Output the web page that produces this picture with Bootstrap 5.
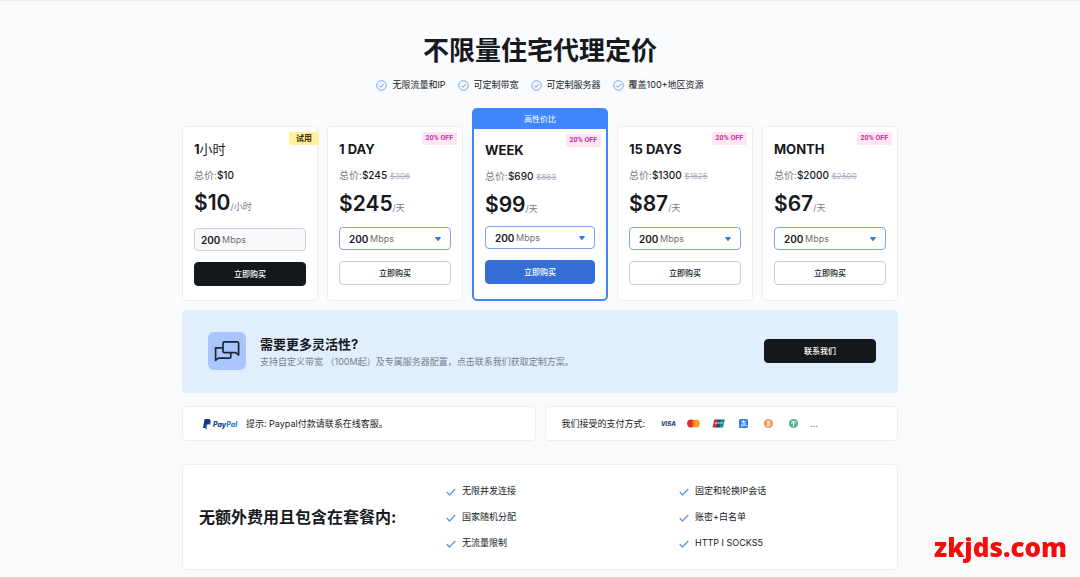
<!DOCTYPE html>
<html lang="zh-CN">
<head>
<meta charset="utf-8">
<meta name="viewport" content="width=device-width, initial-scale=1">
<title>不限量住宅代理定价</title>
<link href="https://cdn.jsdelivr.net/npm/bootstrap@5.3.0/dist/css/bootstrap.min.css" rel="stylesheet">
<style>
  body { font-family: Inter, "Noto Sans CJK SC", sans-serif; font-size: 9px; line-height: 14px; color: #16191d; background: #fafbfd; border-top: 1px solid #eceef1; }
  .page-wrap { max-width: 716px; }
  .page-title { font-size: 26px; line-height: 36px; font-weight: 700; }
  .perks { gap: 12px; margin: 9px 0 16px; }
  .perks svg { width: 11px; height: 11px; }
  .perks li { gap: 5px; }
  .plans { display: grid; grid-template-columns: repeat(5, minmax(0, 1fr)); gap: 9px; align-items: end; }
  .panel { background: #fff; border: 1px solid #eceef2; border-radius: 4px; }
  .plan { min-height: 175px; padding: 13px 11px 15px; position: relative; }
  .plan h2 { font-size: 13px; line-height: 18px; font-weight: 700; margin: 0 0 8px; }
  .plan .total { font-size: 10px; line-height: 18px; margin: 0 0 6px; color: #777c86; white-space: nowrap; }
  .plan .total strong { font-weight: 500; color: #16191d; }
  .plan .total s { font-size: 8px; color: #aaaebf; }
  .plan .price { font-size: 21px; line-height: 26px; font-weight: 600; margin: 0 0 10px; white-space: nowrap; }
  .plan .price span { font-size: 9px; line-height: 12px; font-weight: 400; color: #777c86; }
  .off { position: absolute; top: 5px; right: 5px; font-family: Roboto, "Noto Sans CJK SC", sans-serif; font-size: 7px; line-height: 13px; padding: 0 4px; font-weight: 700; color: #c0359f; background: #fde5f1; border-radius: 2px; }
  .trial-tag { right: -2px; padding: 0 7px; font-size: 8px; color: #4a2b12; background: #fff19b; border-radius: 2px 2px 0 2px; }
  .rate { position: relative; margin-bottom: 11px; }
  .rate .form-select, .rate .form-control { height: 23px; min-height: 0; font-size: 10px; line-height: 14px; font-weight: 600; color: #16191d; padding: 0 20px 0 9px; border: 1px solid #7ea6e8; border-radius: 4px; }
  .rate .form-select { background-image: url("data:image/svg+xml,%3Csvg xmlns='http://www.w3.org/2000/svg' viewBox='0 0 6 4'%3E%3Cpath d='M.6 0h4.8q.6.1.4.7L3.5 3.7q-.5.5-1 0L.2.7Q0 .1.6 0z' fill='%232b7fe0'/%3E%3C/svg%3E"); background-size: 6px 4px; background-position: right 9px center; }
  .rate .form-control { padding-left: 6px; background: #f9f9fb; border-color: #cdd0da; }
  .rate label { position: absolute; left: 31px; top: 0; line-height: 24px; font-size: 9px; color: #6d7077; pointer-events: none; }
  .rate .form-control + label { left: 28px; }
  .buy { --bs-btn-font-size: 8px; --bs-btn-line-height: 14px; --bs-btn-padding-y: 4px; --bs-btn-padding-x: 8px; --bs-btn-border-radius: 4px; --bs-btn-font-weight: 500; --bs-btn-color: #16191d; --bs-btn-bg: #fff; --bs-btn-border-color: #c9ccd6; }
  .buy-dark { --bs-btn-color: #fff; --bs-btn-bg: #14181b; --bs-btn-border-color: #14181b; }
  .buy-blue { --bs-btn-color: #fff; --bs-btn-bg: #356fd5; --bs-btn-border-color: #356fd5; }
  .plan-trial { padding-bottom: 14px; }
  .plan-trial .price { margin-bottom: 12px; }
  .plan-best { border: 2px solid #3f86fd; border-radius: 5px; padding: 0 0 15px; }
  .plan-best .ribbon { background: #3f86fd; color: #fff; font-size: 8px; line-height: 19px; text-align: center; }
  .plan-best .body-in { position: relative; padding: 12px 11px 0; }
  .plan-best .price { margin-bottom: 8px; }
  .banner { background: #e1eefe; border-radius: 4px; margin-top: 9px; padding: 22px 22px 23px 26px; }
  .chat-box { width: 38px; height: 38px; border-radius: 6px; margin-right: 14px; background: #a8c5fe; }
  .banner h2 { font-size: 13px; line-height: 20px; font-weight: 700; margin: 0; }
  .banner p { line-height: 15px; color: #747e8e; margin: 0; }
  .banner .buy { width: 112px; }
  .notes { display: grid; grid-template-columns: 1fr 1fr; gap: 9px; margin-top: 13px; }
  .notes .panel { min-height: 35px; padding: 0 16px; }
  .pays { gap: 8px; margin-left: 15px; }
  .pays svg { width: 17px; height: 11px; }
  .extras { margin: 23px 0 7px; padding: 19px 16px; display: grid; grid-template-columns: 247px 233px 1fr; align-items: center; }
  .extras h2 { font-size: 16px; line-height: 24px; font-weight: 700; margin: 0; white-space: nowrap; }
  .extras ul { display: grid; gap: 12px; }
  .extras li { gap: 6px; }
  .extras li svg { width: 10px; height: 8px; margin-top: 2px; }
  .watermark { position: fixed; right: 13px; bottom: 13px; font: 800 26px/34px "Open Sans", "Noto Sans", sans-serif; color: #f70b0b; }
  @media (max-width: 700px) { .plans { grid-template-columns: 1fr 1fr; } .notes, .extras { grid-template-columns: 1fr; } .perks, .banner { flex-wrap: wrap; } }
</style>
</head>
<body>
<svg class="d-none" aria-hidden="true">
  <symbol id="ring" viewBox="0 0 22 22"><circle cx="11" cy="11" r="9.6" fill="#f3f7ff" stroke="#6d9cf3" stroke-width="1.8"/><path d="M6.2 11.2l3.4 3.4 6.2-6.6" fill="none" stroke="#6d9cf3" stroke-width="2"/></symbol>
  <symbol id="tick" viewBox="0 0 20 16"><path d="M1.5 8l5.500 6L18.500 2" fill="none" stroke="#5b91ee" stroke-width="2.4"/></symbol>
</svg>
<main class="page-wrap mx-auto">
  <h1 class="page-title text-center mb-0 pt-3 mt-3">不限量住宅代理定价</h1>
  <ul class="perks list-unstyled d-flex justify-content-center">
    <li class="d-flex align-items-center"><svg><use href="#ring"/></svg>无限流量和IP</li>
    <li class="d-flex align-items-center"><svg><use href="#ring"/></svg>可定制带宽</li>
    <li class="d-flex align-items-center"><svg><use href="#ring"/></svg>可定制服务器</li>
    <li class="d-flex align-items-center"><svg><use href="#ring"/></svg>覆盖100+地区资源</li>
  </ul>

  <section class="plans">
    <article class="plan panel plan-trial">
      <span class="off trial-tag">试用</span>
      <h2>1<span class="fw-normal">小时</span></h2>
      <p class="total">总价:<strong>$10</strong></p>
      <p class="price">$10<span>/小时</span></p>
      <div class="rate"><input class="form-control" id="r1" value="200" readonly><label for="r1">Mbps</label></div>
      <button type="button" class="btn buy buy-dark w-100 d-block">立即购买</button>
    </article>
    <article class="plan panel">
      <span class="off">20% OFF</span>
      <h2>1 DAY</h2>
      <p class="total">总价:<strong>$245</strong> <s>$306</s></p>
      <p class="price">$245<span>/天</span></p>
      <div class="rate"><select class="form-select" id="r2"><option>200</option></select><label for="r2">Mbps</label></div>
      <button type="button" class="btn buy w-100 d-block">立即购买</button>
    </article>
    <article class="plan panel plan-best">
      <div class="ribbon">高性价比</div>
      <div class="body-in">
        <span class="off">20% OFF</span>
        <h2>WEEK</h2>
        <p class="total">总价:<strong>$690</strong> <s>$863</s></p>
        <p class="price">$99<span>/天</span></p>
        <div class="rate"><select class="form-select" id="r3"><option>200</option></select><label for="r3">Mbps</label></div>
        <button type="button" class="btn buy buy-blue w-100 d-block">立即购买</button>
      </div>
    </article>
    <article class="plan panel">
      <span class="off">20% OFF</span>
      <h2>15 DAYS</h2>
      <p class="total">总价:<strong>$1300</strong> <s>$1625</s></p>
      <p class="price">$87<span>/天</span></p>
      <div class="rate"><select class="form-select" id="r4"><option>200</option></select><label for="r4">Mbps</label></div>
      <button type="button" class="btn buy w-100 d-block">立即购买</button>
    </article>
    <article class="plan panel">
      <span class="off">20% OFF</span>
      <h2>MONTH</h2>
      <p class="total">总价:<strong>$2000</strong> <s>$2500</s></p>
      <p class="price">$67<span>/天</span></p>
      <div class="rate"><select class="form-select" id="r5"><option>200</option></select><label for="r5">Mbps</label></div>
      <button type="button" class="btn buy w-100 d-block">立即购买</button>
    </article>
  </section>

  <section class="banner d-flex align-items-center">
    <div class="chat-box d-flex align-items-center justify-content-center flex-shrink-0">
      <svg width="26" height="22" viewBox="0 0 26 22" fill="none" stroke="#1c2736" stroke-width="1.7" stroke-linejoin="round"><path d="M10.400 1.800h12.800q1.400 0 1.400 1.400v11.800l-2.800-2.300H10.400Q9 12.700 9 11.300V3.200q0-1.400 1.400-1.400z"/><path d="M9 7.800H1.600v12.600l2.800-2.200h11.200q1.200 0 1.200-1.200v-4.300"/></svg>
    </div>
    <div class="me-auto">
      <h2>需要更多灵活性?</h2>
      <p>支持自定义带宽 （100M起）及专属服务器配置，点击联系我们获取定制方案。</p>
    </div>
    <button type="button" class="btn buy buy-dark">联系我们</button>
  </section>

  <section class="notes">
    <div class="panel d-flex align-items-center">
      <svg class="ms-1 me-2" width="35" height="12" viewBox="0 0 35 12" role="img" aria-label="PayPal">
        <path d="M1.600 1h3.600q3 .2 2.300 3Q6.800 6.800 3.600 6.800L3 10H0z" fill="#123a80"/><path d="M7.800 3.200q.9 4-3.400 4.400L3.800 11H2l.7-3.400h1.200Q7 7.200 7.800 3.200z" fill="#2790e0"/>
        <text x="10" y="9" font-family="Inter, sans-serif" font-size="7" font-weight="800" font-style="italic" fill="#173d86">Pay<tspan fill="#2482df">Pal</tspan></text>
      </svg>
      <span>提示: Paypal付款请联系在线客服。</span>
    </div>
    <div class="panel d-flex align-items-center">
      <span>我们接受的支付方式:</span>
      <div class="pays d-flex align-items-center">
        <svg viewBox="0 0 17 11" role="img" aria-label="Visa"><text x="1" y="8" font-family="Inter, sans-serif" font-size="6" font-weight="800" font-style="italic" fill="#28417f">VISA</text></svg>
        <svg viewBox="0 0 17 11"><circle cx="6" cy="5.500" r="3.900" fill="#e8252b"/><circle cx="11" cy="5.500" r="3.900" fill="#f7a02a"/><path d="M8.500 2.500a3.900 3.900 0 0 1 0 6 3.900 3.900 0 0 1 0-6z" fill="#f26322"/></svg>
        <svg viewBox="0 0 17 11"><path d="M4.200 1.500h4L6.600 9.500H2.500z" fill="#d8273d"/><path d="M7.600 1.500h4L10 9.500H6z" fill="#1d4b78"/><path d="M11 1.500h3.800L13 9.500H9.400z" fill="#168a8c"/><path d="M5.400 4.200l-.4 1.600h1.400l.5-1.600M8 6V4.300h1.200V6m1-1.700h1.500L10.700 6m2-1.700v1.400" fill="none" stroke="#fff" stroke-width=".6"/></svg>
        <svg viewBox="0 0 17 11"><rect x="4" y="1" width="9" height="9" rx="1.500" fill="#277bf5"/><path d="M6 3.300h5M8.500 2v3M6.500 5h4q-1 3-3.200 3.200-1.500 0-1.300-1.100 1-1.500 6.500 1.100" fill="none" stroke="#fff" stroke-width=".8"/></svg>
        <svg viewBox="0 0 17 11"><circle cx="8.500" cy="5.500" r="4.600" fill="#f29b59"/><path d="M7.200 3.400h1.700q1.300.1 1.100 1-.1 1-2.400 1 2.300 0 2.200 1.200-.2 1-1.600 1H7M7.900 2.500v6" fill="none" stroke="#fff" stroke-width=".8"/></svg>
        <svg viewBox="0 0 17 11"><circle cx="8.500" cy="5.500" r="4.600" fill="#52b596"/><path d="M6.300 3.700h4.400M8.500 3.700v4.700" fill="none" stroke="#fff" stroke-width="1.1"/><path d="M6 5.400q2.500 1 5 0" fill="none" stroke="#fff" stroke-width=".5"/></svg>
        <span class="text-secondary">...</span>
      </div>
    </div>
  </section>

  <section class="extras panel">
    <h2>无额外费用且包含在套餐内:</h2>
    <ul class="list-unstyled mb-0">
      <li class="d-flex align-items-center"><svg><use href="#tick"/></svg>无限并发连接</li>
      <li class="d-flex align-items-center"><svg><use href="#tick"/></svg>国家随机分配</li>
      <li class="d-flex align-items-center"><svg><use href="#tick"/></svg>无流量限制</li>
    </ul>
    <ul class="list-unstyled mb-0">
      <li class="d-flex align-items-center"><svg><use href="#tick"/></svg>固定和轮换IP会话</li>
      <li class="d-flex align-items-center"><svg><use href="#tick"/></svg>账密+白名单</li>
      <li class="d-flex align-items-center"><svg><use href="#tick"/></svg>HTTP I SOCKS5</li>
    </ul>
  </section>
</main>
<div class="watermark">zkjds.com</div>
<script src="https://cdn.jsdelivr.net/npm/bootstrap@5.3.0/dist/js/bootstrap.bundle.min.js"></script>
</body>
</html>
